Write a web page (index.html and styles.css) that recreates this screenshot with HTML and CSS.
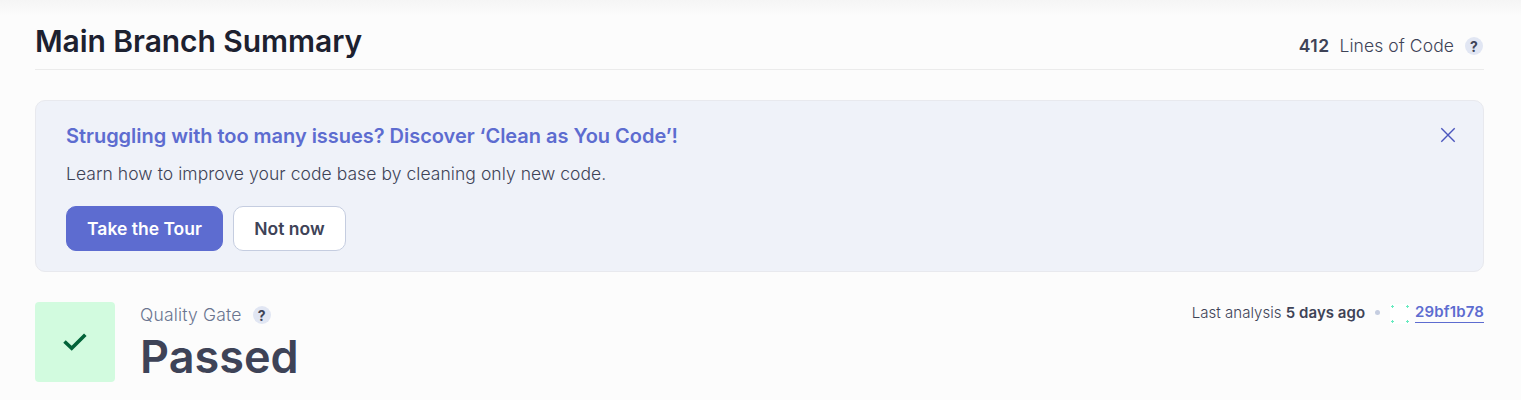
FILE: index.html
```html
<!DOCTYPE html>
<html lang="en">
<head>
<meta charset="utf-8">
<title>Main Branch Summary</title>
<link rel="stylesheet" href="styles.css">
</head>
<body>
<main class="page">
  <header class="header">
    <h1 class="title">Main Branch Summary</h1>
    <div class="loc"><strong class="loc-count">412</strong><span class="loc-label">Lines of Code</span><span class="help">?</span></div>
  </header>
  <section class="promo">
    <div class="promo-body">
      <h2 class="promo-title">Struggling with too many issues? Discover ‘Clean as You Code’!</h2>
      <p class="promo-text">Learn how to improve your code base by cleaning only new code.</p>
      <div class="actions">
        <button class="btn primary">Take the Tour</button>
        <button class="btn">Not now</button>
      </div>
    </div>
    <svg class="close" viewBox="0 0 16 16"><path d="M1.300 1.300l13.400 13.400M14.700 1.300l-13.400 13.400"/></svg>
  </section>
  <section class="status">
    <div class="badge"><svg class="check" viewBox="0 0 24 20"><path d="M1.500 9.500l7.200 6.800L22.300 2.700"/></svg></div>
    <div class="gate">
      <div class="gate-label"><span>Quality Gate</span><span class="help">?</span></div>
      <div class="gate-value">Passed</div>
    </div>
    <div class="analysis">
      <span class="analysis-text">Last analysis <b>5 days ago</b></span>
      <span class="dot"></span>
      <svg class="commit" viewBox="0 0 20 20"><path d="M1 2.500h3M2.500 1v3M16 2.500h3M17.500 1v3M1 17.500h3M2.500 16v3M16 17.500h3M17.500 16v3"/></svg>
      <a class="hash">29bf1b78</a>
    </div>
  </section>
</main>
</body>
</html>
```
FILE: styles.css
```css
* { box-sizing: border-box; }
body { margin: 0; height: 400px; overflow: hidden; background: linear-gradient(#f5f5f5, #fcfcfc 16px); color: #3e4357; font-family: Inter, sans-serif; font-size: 17.5px; }
h1, h2, p { margin: 0; }
.page { padding: 0 37px 0 35px; }
.header { display: flex; justify-content: space-between; height: 70px; border-bottom: 1px solid #ebebeb; }
.title { padding-top: 21px; font-size: 30px; line-height: 40px; font-weight: 570; letter-spacing: -0.06px; color: #1d2130; white-space: nowrap; }
.loc { display: flex; align-items: center; height: 24px; margin-top: 34px; padding-right: 1px; font-weight: 360; letter-spacing: 0.08px; }
.loc-count { font-weight: 600; margin-right: 10px; letter-spacing: 0.4px; }
.loc-count, .loc-label { margin-top: -2px; }
.loc-label { margin-right: 11px; }
.help { display: inline-flex; width: 18px; height: 18px; align-items: center; justify-content: center; border-radius: 50%; background: #e1e6f3; color: #3e4357; font-size: 14px; font-weight: 700; letter-spacing: 0; }
.promo { display: flex; justify-content: space-between; height: 172px; margin-top: 30px; padding: 23px 27px 0 30px; border: 1px solid #e8e9ee; border-radius: 10px; background: #eff2f9; }
.promo-title { font-size: 20px; line-height: 24px; font-weight: 570; letter-spacing: -0.03px; color: #5d6cd0; }
.promo-text { margin-top: 14px; line-height: 24px; font-weight: 360; letter-spacing: 0.06px; }
.actions { display: flex; gap: 10px; margin-top: 20px; }
.btn { width: 113px; height: 45px; padding: 0; border: 1px solid #c5cde0; border-radius: 10px; background: #fff; color: #3e4357; font: 600 17.5px Inter, sans-serif; }
.primary { width: 157px; border-color: #5d6cd0; background: #5d6cd0; color: #fff; }
.close { width: 16px; height: 16px; margin-top: 3px; fill: none; stroke: #4b56bd; stroke-width: 1.4; }
.status { display: flex; margin-top: 30px; }
.badge { display: flex; width: 80px; height: 80px; align-items: center; justify-content: center; border-radius: 4px; background: #d2fbdf; }
.check { width: 24px; height: 20px; fill: none; stroke: #026339; stroke-width: 3.6; }
.gate { margin-left: 25px; }
.gate-label { display: flex; align-items: center; gap: 11px; height: 26px; color: #6a7590; font-weight: 360; letter-spacing: 0.18px; }
.gate-label span:first-child { margin-top: -2px; }
.gate-value { font-size: 45px; line-height: 58px; font-weight: 600; }
.analysis { display: flex; align-items: center; height: 21px; margin-left: auto; font-size: 15px; font-weight: 360; letter-spacing: 0.04px; }
.analysis b, .hash { font-weight: 600; }
.dot { width: 5px; height: 5px; margin: 0 10px; border-radius: 50%; background: #c5cde0; }
.commit { width: 20px; height: 20px; margin: 2px 5px 0 0; background: #fff; stroke: #68ebc0; stroke-width: 1; }
.hash { height: 21px; line-height: 20px; border-bottom: 1px solid #5d6cd0; color: #5d6cd0; letter-spacing: 0.13px; }
```
